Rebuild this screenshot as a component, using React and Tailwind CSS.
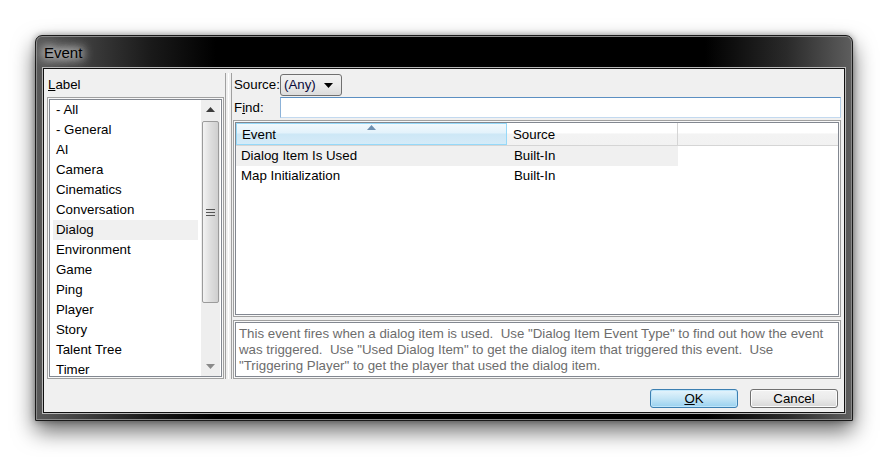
import React from 'react';

// ── Data ──────────────────────────────────────────────────────────────────────

const LABELS = [
  '- All', '- General', 'AI', 'Camera', 'Cinematics', 'Conversation', 'Dialog',
  'Environment', 'Game', 'Ping', 'Player', 'Story', 'Talent Tree', 'Timer',
];

const EVENTS = [
  { name: 'Dialog Item Is Used', source: 'Built-In', selected: true },
  { name: 'Map Initialization', source: 'Built-In' },
];

const DESCRIPTION = [
  'This event fires when a dialog item is used.\u00a0 Use "Dialog Item Event Type" to find out how the event',
  'was triggered.\u00a0 Use "Used Dialog Item" to get the dialog item that triggered this event.\u00a0 Use',
  '"Triggering Player" to get the player that used the dialog item.',
];

// ── Sub-components ────────────────────────────────────────────────────────────

function Arrow({ up }) {
  return (
    <svg width="9" height="5" viewBox="0 0 9 5">
      <path d={up ? 'M0 5 L4.5 0 L9 5 Z' : 'M0 0 L4.5 5 L9 0 Z'} fill={up ? '#3c3c3c' : '#8a8a8a'} />
    </svg>
  );
}

function ScrollBar() {
  return (
    <div className="w-[19px] h-full bg-[#eeeeee] flex flex-col items-stretch px-[1px]">
      <div className="h-[19px] flex items-center justify-center shrink-0"><Arrow up /></div>
      <div className="h-[182px] mt-[2px] rounded-[2px] border border-[#9b9b9b] bg-gradient-to-r from-[#f3f3f3] via-[#dedede] to-[#cfcfcf] flex items-center justify-center">
        <div className="flex flex-col gap-[2px]">
          <div className="w-[9px] h-[1px] bg-[#555]" />
          <div className="w-[9px] h-[1px] bg-[#555]" />
          <div className="w-[9px] h-[1px] bg-[#555]" />
        </div>
      </div>
      <div className="flex-1" />
      <div className="h-[19px] flex items-center justify-center shrink-0"><Arrow /></div>
    </div>
  );
}

function Button({ children, primary }) {
  return (
    <div
      className={`w-[88px] h-[19px] rounded-[3px] border flex items-center justify-center text-black ${
        primary
          ? 'border-[#3c7fb1] bg-gradient-to-b from-[#e5f4fc] via-[#c4e5f6] to-[#98d1ef] shadow-[inset_0_0_0_1px_#bfe6fb]'
          : 'border-[#707070] bg-gradient-to-b from-[#f2f2f2] via-[#ebebeb] to-[#d6d6d6] shadow-[inset_0_0_0_1px_#fcfcfc]'
      }`}
    >
      {children}
    </div>
  );
}

// ── Page ──────────────────────────────────────────────────────────────────────

export default function App() {
  return (
    <div className="w-[888px] h-[457px] bg-white pl-[35px] pt-[35px] font-['Liberation_Sans',Arial,sans-serif] text-[13.3px] leading-none text-black">
      {/* ── Window frame ─────────────────────────────────────────────── */}
      <div className="w-[818px] h-[386px] rounded-t-[7px] border border-[#1a1a1a] shadow-[0_10px_22px_rgba(0,0,0,0.6),0_0_6px_rgba(0,0,0,0.35),inset_0_0_0_1px_#8a8a8a] bg-[linear-gradient(90deg,#5a5a5a_0%,#1a1a1a_14%,#000_22%,#000_82%,#2a2a2a_92%,#5e5e5e_100%)] flex flex-col px-[7px] pb-[7px]">
        <div className="h-[32px] flex items-center pl-[1px]">
          <span className="text-[15px] text-black [text-shadow:0_0_8px_#fff,0_0_12px_#fff,0_0_14px_#ddd]">Event</span>
        </div>

        {/* ── Client area ──────────────────────────────────────────── */}
        <div className="flex-1 bg-[#f0f0f0] border border-[#111] shadow-[0_0_0_1px_#b8b8b8] flex flex-col">
          <div className="h-[310px] flex px-[3px]">
            {/* Left: label list */}
            <div className="w-[177px] flex flex-col">
              <div className="h-[28px] flex items-center pl-[1px] pt-[4px]">
                <span><span className="underline">L</span>abel</span>
              </div>
              <div className="h-[282px] border border-[#a0a0a0] p-[1px] bg-[#f8f8f8]">
                <div className="h-full border border-[#828790] bg-white flex pl-[3px] pr-[1px]">
                  <div className="flex-1">
                    {LABELS.map((l) => (
                      <div
                        key={l}
                        className={`h-[20px] flex items-center pl-[3px] mr-[3px] ${l === 'Dialog' ? 'bg-[#f0f0f0]' : ''}`}
                      >
                        {l}
                      </div>
                    ))}
                  </div>
                  <ScrollBar />
                </div>
              </div>
            </div>

            {/* Splitter */}
            <div className="w-[9px] flex justify-center gap-[2px] pt-[4px]">
              <div className="w-[1px] bg-[#a0a0a0]" />
              <div className="w-[1px] bg-[#ffffff]" />
              <div className="w-[1px] bg-[#a0a0a0]" />
            </div>

            {/* Right: filters, table, description */}
            <div className="w-[608px] flex flex-col pt-[5px]">
              <div className="h-[22px] flex items-center">
                <span className="w-[47px] pl-[1px]">Source:</span>
                <div className="w-[62px] h-[22px] rounded-[3px] border border-[#707070] bg-gradient-to-b from-[#f2f2f2] via-[#ebebeb] to-[#dcdcdc] flex items-center justify-between pl-[3px] pr-[8px]">
                  <span className="text-[#0a0a3a]">(Any)</span>
                  <svg width="9" height="5" viewBox="0 0 9 5"><path d="M0 0 L4.5 5 L9 0 Z" fill="#000" /></svg>
                </div>
              </div>
              <div className="h-[21px] mt-[1px] flex items-center">
                <span className="w-[47px] pl-[1px]">F<span className="underline">i</span>nd:</span>
                <div className="flex-1 h-[21px] border border-[#abadb3] border-t-[#5b8fc2] border-l-[#8cb2d8] border-r-[#b5cfe7] border-b-[#c3d9ef] bg-white" />
              </div>

              {/* Table */}
              <div className="h-[197px] mt-[2px] border border-[#a0a0a0] p-[1px] bg-[#f8f8f8]">
                <div className="h-full border border-[#828790] bg-white flex flex-col">
                  <div className="h-[23px] flex border-b border-[#d5d5d5]">
                    <div className="w-[271px] relative flex items-center pl-[5px] pt-[1px] border border-[#96d9f9] bg-[linear-gradient(180deg,#f2f9fd_0%,#e3f2fb_45%,#cde7f6_50%,#d5ebf8_100%)]">
                      <svg className="absolute left-[130px] top-[1px]" width="9" height="5" viewBox="0 0 9 5">
                        <path d="M0 5 L4.5 0 L9 5 Z" fill="#6d8fb0" />
                      </svg>
                      Event
                    </div>
                    <div className="w-[171px] flex items-center pl-[6px] pt-[1px] border-r border-[#d5d5d5] bg-[linear-gradient(180deg,#ffffff_0%,#ffffff_45%,#f3f3f3_50%,#f2f2f2_100%)]">
                      Source
                    </div>
                    <div className="flex-1 bg-[linear-gradient(180deg,#ffffff_0%,#ffffff_45%,#f3f3f3_50%,#f2f2f2_100%)]" />
                  </div>
                  <div>
                    {EVENTS.map((e) => (
                      <div key={e.name} className="h-[20px] flex">
                        <div className={`w-[442px] flex ${e.selected ? 'bg-[#f0f0f0]' : ''}`}>
                          <div className="w-[271px] flex items-center pl-[5px]">{e.name}</div>
                          <div className="flex-1 flex items-center pl-[7px]">{e.source}</div>
                        </div>
                      </div>
                    ))}
                  </div>
                </div>
              </div>

              {/* Description */}
              <div className="h-[59px] mt-[3px] border border-[#a0a0a0] p-[1px] bg-[#f8f8f8]">
                <div className="h-full border border-[#828790] bg-white px-[3px] pt-[3px] text-[#6d6d6d] leading-[16px] whitespace-nowrap overflow-hidden">
                  {DESCRIPTION.map((line) => (
                    <div key={line}>{line}</div>
                  ))}
                </div>
              </div>
            </div>
          </div>

          {/* Buttons */}
          <div className="flex justify-end gap-[12px] pr-[6px] mt-[10px]">
            <Button primary><span><span className="underline">O</span>K</span></Button>
            <Button>Cancel</Button>
          </div>
        </div>
      </div>
    </div>
  );
}
